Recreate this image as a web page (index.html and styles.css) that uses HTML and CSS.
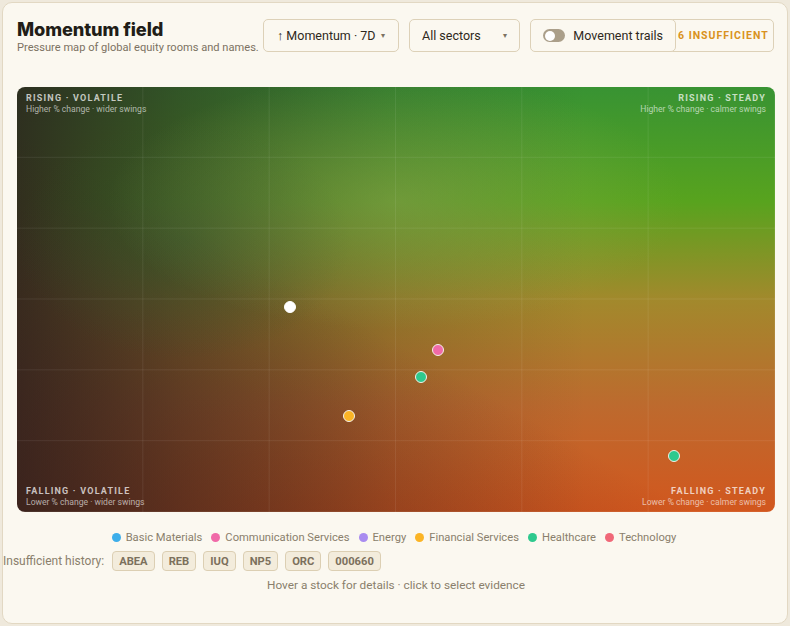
FILE: index.html
```html
<!DOCTYPE html>
<html lang="en">
<head>
    <meta charset="UTF-8">
    <title>Momentum field</title>
    <link rel="stylesheet" href="styles.css">
</head>
<body>
    <div class="card">
        <div class="header">
            <div class="titles">
                <h1>Momentum field</h1>
                <p class="subtitle">Pressure map of global equity rooms and names.</p>
            </div>
            <button class="control metric">&#8593; Momentum · 7D <span class="caret">&#9662;</span></button>
            <button class="control sectors">All sectors <span class="caret">&#9662;</span></button>
            <button class="control trails"><span class="toggle"><span class="knob"></span></span> Movement trails</button>
            <div class="badge">6 INSUFFICIENT</div>
        </div>

        <div class="field">
            <div class="quad-row">
                <div class="quad">
                    <div class="quad-title">RISING · VOLATILE</div>
                    <div class="quad-sub">Higher % change · wider swings</div>
                </div>
                <div class="quad right">
                    <div class="quad-title">RISING · STEADY</div>
                    <div class="quad-sub">Higher % change · calmer swings</div>
                </div>
            </div>
            <div class="quad-row">
                <div class="quad">
                    <div class="quad-title">FALLING · VOLATILE</div>
                    <div class="quad-sub">Lower % change · wider swings</div>
                </div>
                <div class="quad right">
                    <div class="quad-title">FALLING · STEADY</div>
                    <div class="quad-sub">Lower % change · calmer swings</div>
                </div>
            </div>

            <span class="dot selected" style="left: 273px; top: 220px;"></span>
            <span class="dot comm" style="left: 421px; top: 263px;"></span>
            <span class="dot health" style="left: 404px; top: 290px;"></span>
            <span class="dot fin" style="left: 332px; top: 329px;"></span>
            <span class="dot health" style="left: 657px; top: 369px;"></span>
        </div>

        <div class="legend">
            <span class="item"><span class="swatch basic"></span>Basic Materials</span>
            <span class="item"><span class="swatch comm"></span>Communication Services</span>
            <span class="item"><span class="swatch energy"></span>Energy</span>
            <span class="item"><span class="swatch fin"></span>Financial Services</span>
            <span class="item"><span class="swatch health"></span>Healthcare</span>
            <span class="item"><span class="swatch tech"></span>Technology</span>
        </div>

        <div class="history">
            <span class="history-label">Insufficient history:</span>
            <span class="chip">ABEA</span>
            <span class="chip">REB</span>
            <span class="chip">IUQ</span>
            <span class="chip">NP5</span>
            <span class="chip">ORC</span>
            <span class="chip">000660</span>
        </div>

        <p class="hint">Hover a stock for details · click to select evidence</p>
    </div>
</body>
</html>
```

FILE: styles.css
```css
* {
    box-sizing: border-box;
}
body {
    margin: 2px;
    background: #efe9dc;
    font-family: Roboto, Arial, sans-serif;
    color: #3a3326;
}
.card {
    width: 786px;
    height: 622px;
    background: #fbf8f0;
    border: 1px solid #e2d8c3;
    border-radius: 10px;
    padding: 15px 12px 0 14px;
}
.header {
    display: flex;
    align-items: flex-start;
    gap: 10px;
    height: 54px;
    white-space: nowrap;
}
.titles {
    width: 241px;
    margin-right: -5px;
    flex-shrink: 0;
}
h1 {
    font-family: Inter, "Noto Sans", sans-serif;
    font-weight: 800;
    font-size: 18.2px;
    line-height: 22px;
    margin: 0;
    color: #211d17;
    letter-spacing: -0.1px;
}
.subtitle {
    margin: 1px 0 0;
    font-size: 11.1px;
    color: #7c7262;
}
.control {
    flex-shrink: 0;
    margin-top: 1px;
    height: 33px;
    background: #fbf8f0;
    border: 1px solid #ddd1b8;
    border-radius: 5px;
    font-family: Roboto, Arial, sans-serif;
    font-size: 12.5px;
    font-weight: 400;
    color: #2e2820;
    display: flex;
    align-items: center;
    padding: 0 12px;
    cursor: pointer;
    white-space: nowrap;
}
.metric {
    width: 136px;
    padding-left: 13px;
    gap: 5px;
}
.sectors {
    width: 111px;
    justify-content: space-between;
}
.caret {
    font-size: 8px;
    color: #7c7262;
}
.trails {
    width: 146px;
    gap: 8px;
    position: relative;
    z-index: 1;
}
.toggle {
    width: 24px;
    height: 13px;
    border-radius: 7px;
    background: #ab9f8a;
    display: flex;
    align-items: center;
    padding: 0 1.5px;
}
.knob {
    width: 10px;
    height: 10px;
    border-radius: 50%;
    background: #fff;
}
.badge {
    flex-shrink: 0;
    width: 108px;
    margin-top: 1px;
    margin-left: -20px;
    height: 33px;
    border: 1px solid #ddd1b8;
    border-radius: 5px;
    padding: 0 0 0 11px;
    display: flex;
    align-items: center;
    font-size: 10.5px;
    font-weight: 700;
    letter-spacing: 1px;
    color: #d99220;
}
.field {
    position: relative;
    margin-top: 15px;
    width: 758px;
    height: 425px;
    border-radius: 8px;
    overflow: hidden;
    display: flex;
    flex-direction: column;
    justify-content: space-between;
    padding: 6px 9px 4px 9px;
    background:
        linear-gradient(to right, rgba(255, 255, 255, 0.07) 1px, transparent 1px) -1px 0 / calc(100% / 6) 100%,
        linear-gradient(to bottom, rgba(255, 255, 255, 0.07) 1px, transparent 1px) 0 -1px / 100% calc(100% / 6),
        radial-gradient(ellipse 38% 30% at 50% 27%, rgba(150, 170, 90, 0.45), transparent),
        radial-gradient(ellipse 22% 28% at 22% 36%, rgba(45, 80, 45, 0.5), transparent),
        linear-gradient(to top right, rgba(60, 30, 28, 0.5) 0%, rgba(60, 30, 28, 0.2) 28%, rgba(60, 30, 28, 0) 45%),
        linear-gradient(to right, rgba(44, 36, 30, 0.9) 0%, rgba(44, 36, 30, 0.55) 22%, rgba(44, 36, 30, 0.18) 50%, rgba(44, 36, 30, 0) 75%),
        linear-gradient(to bottom, #389333 0%, #58a31e 27%, #a2892c 50%, #bd6a2e 75%, #d2571e 100%);
}
.quad-row {
    display: flex;
    justify-content: space-between;
}
.quad {
    color: rgba(255, 255, 255, 0.72);
}
.quad.right {
    text-align: right;
}
.quad-title {
    font-size: 9px;
    font-weight: 700;
    letter-spacing: 1.2px;
    line-height: 11px;
}
.quad-sub {
    font-size: 8.6px;
    line-height: 11px;
    color: rgba(255, 255, 255, 0.62);
}
.dot {
    position: absolute;
    width: 12px;
    height: 12px;
    margin: -6px 0 0 -6px;
    border-radius: 50%;
    border: 1.5px solid #f4f0ea;
}
.dot.selected {
    background: #fff;
    border-color: #fff;
}
.comm, .swatch.comm { background: #f06aa8; }
.health, .swatch.health { background: #2ec98e; }
.fin, .swatch.fin { background: #fbb425; }
.swatch.basic { background: #3daeea; }
.swatch.energy { background: #a98cf0; }
.swatch.tech { background: #f06878; }
.legend {
    display: flex;
    justify-content: center;
    gap: 9px;
    margin-top: 19px;
    font-size: 11.2px;
    color: #8a7f6c;
    padding-right: 4px;
}
.item {
    display: flex;
    align-items: center;
    gap: 5px;
}
.swatch {
    width: 9px;
    height: 9px;
    border-radius: 50%;
}
.history {
    display: flex;
    align-items: center;
    gap: 7px;
    margin: 7px 0 0 -14px;
    font-size: 11.2px;
    color: #8a7f6c;
}
.history-label {
    font-size: 12px;
    margin-right: 1px;
}
.chip {
    height: 20px;
    padding: 0 6px;
    border: 1px solid #dccfb3;
    border-radius: 4px;
    background: #f3ecdc;
    display: flex;
    align-items: center;
    font-weight: 700;
    color: #7c705c;
}
.hint {
    margin: 7px 0 0;
    text-align: center;
    font-size: 11.8px;
    color: #8a7f6c;
}
```
